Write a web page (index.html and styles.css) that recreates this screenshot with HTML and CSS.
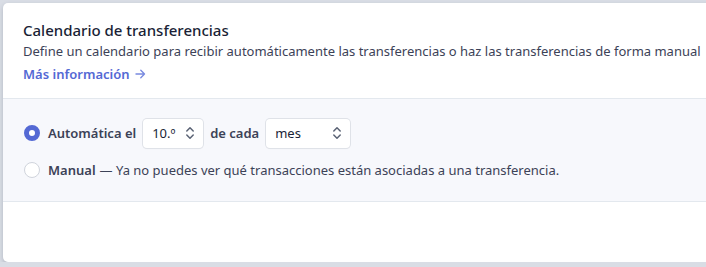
FILE: index.html
```html
<!DOCTYPE html>
<html>

<head>
    <title>Calendario de transferencias</title>
    <link rel="stylesheet" href="styles.css">
</head>

<body>
    <div class="card">
        <div class="card-header">
            <h2>Calendario de transferencias</h2>
            <p>Define un calendario para recibir automáticamente las transferencias o haz las transferencias de forma manual</p>
            <a href="#" class="more-link">Más información
                <svg width="11" height="10" viewBox="0 0 11 10"><path d="M1 5 H9.5 M5.8 1.3 L9.5 5 L5.8 8.7" fill="none" stroke="#7a8be0" stroke-width="1.4" stroke-linecap="round" stroke-linejoin="round"/></svg>
            </a>
        </div>
        <div class="card-body">
            <div class="option-row">
                <span class="radio checked"></span>
                <span class="option-label">Automática el</span>
                <div class="select-box small">
                    <span>10.º</span>
                    <svg width="10" height="14" viewBox="0 0 10 14"><path d="M1.8 5 L5 1.8 L8.2 5 M1.8 9 L5 12.2 L8.2 9" fill="none" stroke="#5a6274" stroke-width="1.5" stroke-linecap="round" stroke-linejoin="round"/></svg>
                </div>
                <span class="option-label">de cada</span>
                <div class="select-box wide">
                    <span>mes</span>
                    <svg width="10" height="14" viewBox="0 0 10 14"><path d="M1.8 5 L5 1.8 L8.2 5 M1.8 9 L5 12.2 L8.2 9" fill="none" stroke="#5a6274" stroke-width="1.5" stroke-linecap="round" stroke-linejoin="round"/></svg>
                </div>
            </div>
            <div class="option-row">
                <span class="radio"></span>
                <span class="option-label">Manual</span>
                <span class="option-note">— Ya no puedes ver qué transacciones están asociadas a una transferencia.</span>
            </div>
        </div>
        <div class="card-footer"></div>
    </div>
</body>

</html>
```

FILE: styles.css
```css
body {
    margin: 0;
    padding: 3px 0 0 3px;
    background: #d9dde5;
    font-family: "Noto Sans", Arial, sans-serif;
    color: #3c4257;
    overflow: hidden;
}

.card {
    width: 720px;
    background: #fff;
    border-radius: 5px;
    box-shadow: 0 2px 4px rgba(60, 66, 87, 0.25);
}

.card-header {
    padding: 16px 20px 14px 20px;
    border-bottom: 1px solid #e3e8ee;
}

.card-header h2 {
    margin: 0;
    font-size: 15px;
    font-weight: 500;
    color: #1a1f36;
    line-height: 22px;
}

.card-header p {
    margin: 0;
    font-size: 13px;
    line-height: 21px;
    color: #3c4257;
}

.more-link {
    display: inline-flex;
    align-items: center;
    gap: 5px;
    font-size: 13px;
    line-height: 20px;
    font-weight: 600;
    color: #5469d4;
    text-decoration: none;
}

.card-body {
    background: #f7f8fc;
    padding: 19px 20px 16px 20px;
    border-bottom: 1px solid #e3e8ee;
    display: flex;
    flex-direction: column;
    gap: 7px;
}

.option-row {
    display: flex;
    align-items: center;
    gap: 7px;
    font-size: 13px;
    height: 30px;
}

.radio {
    width: 14px;
    height: 14px;
    border-radius: 50%;
    background: #fff;
    border: 1px solid #d0d4dc;
    margin-right: 1px;
    margin-left: 1px;
    box-sizing: content-box;
}

.radio.checked {
    width: 6px;
    height: 6px;
    border: 5px solid #5469d4;
}

.option-label {
    font-weight: 600;
    color: #3c4257;
}

.option-note {
    margin-left: -3px;
}

.select-box {
    display: flex;
    align-items: center;
    justify-content: space-between;
    height: 29px;
    box-sizing: border-box;
    padding: 0 8px 0 9px;
    background: #fff;
    border-radius: 4px;
    box-shadow: 0 0 0 1px #dfe2e8, 0 1px 1px rgba(0, 0, 0, 0.08);
    color: #1a1f36;
}

.select-box.small {
    width: 60px;
}

.select-box.wide {
    width: 84px;
}

.card-footer {
    height: 60px;
}
```
